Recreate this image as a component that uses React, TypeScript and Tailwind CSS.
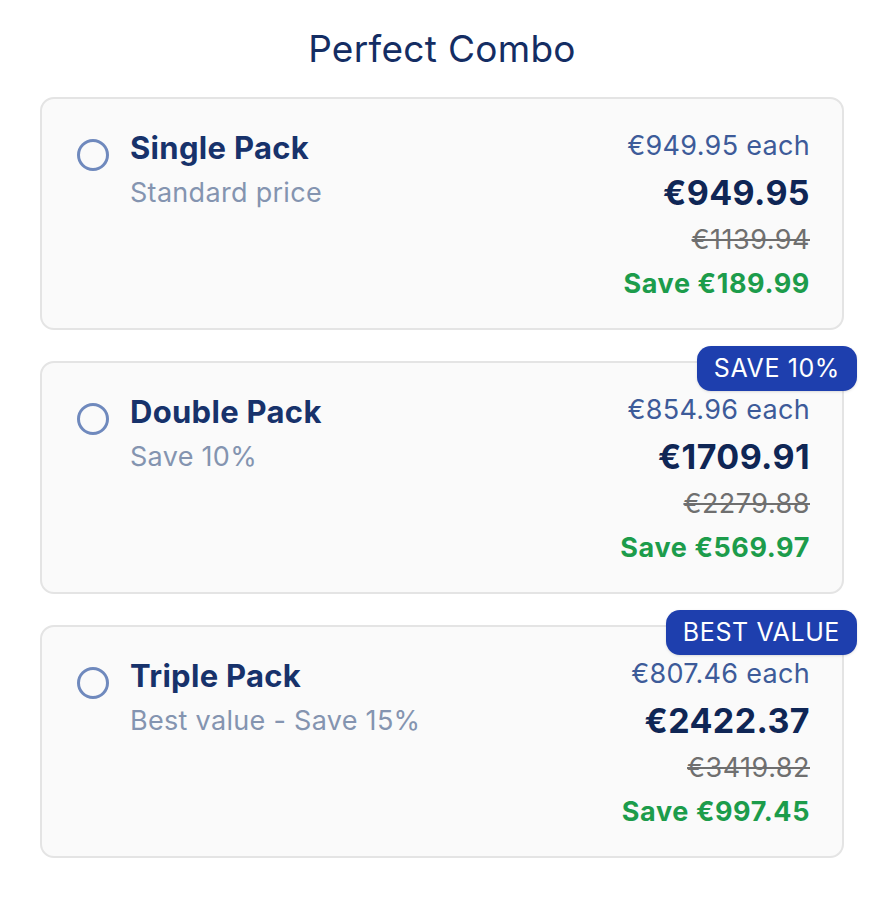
const packs = [
  {
    name: "Single Pack",
    note: "Standard price",
    each: "€949.95 each",
    price: "€949.95",
    was: "€1139.94",
    save: "Save €189.99",
    badge: null as string | null,
  },
  {
    name: "Double Pack",
    note: "Save 10%",
    each: "€854.96 each",
    price: "€1709.91",
    was: "€2279.88",
    save: "Save €569.97",
    badge: "SAVE 10%",
  },
  {
    name: "Triple Pack",
    note: "Best value - Save 15%",
    each: "€807.46 each",
    price: "€2422.37",
    was: "€3419.82",
    save: "Save €997.45",
    badge: "BEST VALUE",
  },
];

function PackCard({ pack }: { pack: (typeof packs)[number] }) {
  return (
    <div className="relative flex items-start justify-between rounded-[14px] border-2 border-[#e4e4e4] bg-[#fafafa] pb-[28px] pl-[35px] pr-[32px] pt-[31px]">
      {pack.badge && (
        <span className="absolute right-[-15px] top-[-17px] rounded-[14px] bg-[#1e3fae] px-[17px] py-[6px] text-[25px] leading-[33px] tracking-[0.6px] text-white shadow-sm">
          {pack.badge}
        </span>
      )}
      <div className="flex items-start gap-[21px]">
        <span className="mt-[9px] block size-[32px] rounded-full border-[3px] border-[#6f89bd]" />
        <div className="flex flex-col">
          <span className="text-[31px] font-bold leading-[36px] tracking-[0.3px] text-[#17326b]">{pack.name}</span>
          <span className="mt-[11px] text-[27px] leading-[32px] tracking-[0.3px] text-[#8494b0]">{pack.note}</span>
        </div>
      </div>
      <div className="flex flex-col items-end">
        <span className="text-[27px] leading-[32px] tracking-[0.3px] text-[#3d5b99]">{pack.each}</span>
        <span className="mt-[11px] text-[34px] font-bold leading-[40px] tracking-[0.4px] text-[#0f2655]">{pack.price}</span>
        <span className="mt-[11px] text-[27px] leading-[32px] tracking-[0.5px] text-[#6f6f6f] line-through">{pack.was}</span>
        <span className="mt-[12px] text-[27px] font-bold leading-[32px] tracking-[0.6px] text-[#1c9c4b]">{pack.save}</span>
      </div>
    </div>
  );
}

export default function App() {
  return (
    <main className="min-h-screen bg-white px-[40px] pt-[27px] font-['Inter','Liberation_Sans',sans-serif]">
      <h1 className="mb-[26px] text-center text-[37px] leading-[44px] tracking-[0.3px] text-[#142d63]">Perfect Combo</h1>
      <div className="flex flex-col gap-[31px]">
        {packs.map((p) => (
          <PackCard key={p.name} pack={p} />
        ))}
      </div>
    </main>
  );
}
